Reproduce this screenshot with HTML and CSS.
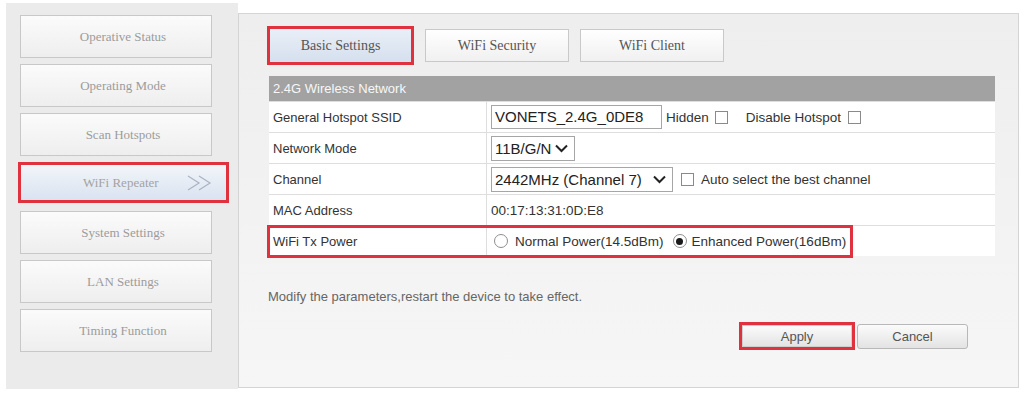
FILE: index.html
```html
<!DOCTYPE html>
<html>
<head>
<meta charset="utf-8">
<link rel="stylesheet" href="styles.css">
</head>
<body>
<div class="page">
  <aside class="sidebar">
    <div class="nav-btn">Operative Status</div>
    <div class="nav-btn">Operating Mode</div>
    <div class="nav-btn">Scan Hotspots</div>
    <div class="nav-btn active">
      <span>WiFi Repeater</span>
      <svg class="chev" width="26" height="16" viewBox="0 0 26 16"><polyline points="1,1 12,8 1,15" /><polyline points="12,1 23,8 12,15" /></svg>
    </div>
    <div class="nav-btn">System Settings</div>
    <div class="nav-btn">LAN Settings</div>
    <div class="nav-btn">Timing Function</div>
  </aside>
  <main class="content">
    <div class="tabs">
      <div class="tab active">Basic Settings</div>
      <div class="tab">WiFi Security</div>
      <div class="tab">WiFi Client</div>
    </div>
    <div class="table">
      <div class="thead">2.4G Wireless Network</div>
      <div class="row">
        <div class="label">General Hotspot SSID</div>
        <div class="value">
          <div class="textbox">VONETS_2.4G_0DE8</div>
          <span class="txt hidden-lbl">Hidden</span>
          <span class="check c-hidden"></span>
          <span class="txt disable-lbl">Disable Hotspot</span>
          <span class="check c-disable"></span>
        </div>
      </div>
      <div class="row">
        <div class="label">Network Mode</div>
        <div class="value">
          <div class="select sel-mode"><span>11B/G/N</span><svg class="arrow" width="13" height="9" viewBox="0 0 13 9"><polyline points="1,1.5 6.5,7 12,1.5" /></svg></div>
        </div>
      </div>
      <div class="row">
        <div class="label">Channel</div>
        <div class="value">
          <div class="select sel-chan"><span>2442MHz (Channel 7)</span><svg class="arrow" width="13" height="9" viewBox="0 0 13 9"><polyline points="1,1.5 6.5,7 12,1.5" /></svg></div>
          <span class="check c-auto"></span>
          <span class="txt auto-lbl">Auto select the best channel</span>
        </div>
      </div>
      <div class="row">
        <div class="label">MAC Address</div>
        <div class="value"><span class="txt">00:17:13:31:0D:E8</span></div>
      </div>
      <div class="row power-row">
        <div class="label">WiFi Tx Power</div>
        <div class="value">
          <span class="radio"></span>
          <span class="txt r-lbl">Normal Power(14.5dBm)</span>
          <span class="radio checked"></span>
          <span class="txt r-lbl2">Enhanced Power(16dBm)</span>
        </div>
        <span class="highlight"></span>
      </div>
    </div>
    <p class="note">Modify the parameters,restart the device to take effect.</p>
    <div class="actions">
      <div class="apply-wrap"><button class="btn">Apply</button></div>
      <button class="btn cancel">Cancel</button>
    </div>
  </main>
</div>
</body>
</html>
```

FILE: styles.css
```css
html, body {
  margin: 0;
  background: #ffffff;
  font-family: "Liberation Sans", Arial, sans-serif;
}

.page {
  display: flex;
  align-items: flex-start;
  padding: 3px 0 0 6px;
  height: 396px;
  box-sizing: border-box;
}

/* Sidebar */
.sidebar {
  width: 232px;
  height: 386px;
  box-sizing: border-box;
  background: #ebebeb;
  padding: 12px 0 0 14px;
  display: flex;
  flex-direction: column;
  gap: 6px;
}

.nav-btn {
  width: 192px;
  height: 43px;
  box-sizing: border-box;
  border: 1px solid #c8c8c8;
  background: linear-gradient(#fbfbfb, #eeeeee);
  display: flex;
  align-items: center;
  justify-content: center;
  padding-left: 14px;
  font-family: "Liberation Serif", "Times New Roman", serif;
  font-size: 13px;
  color: #9c9c9c;
}

.nav-btn.active {
  width: 211px;
  height: 41px;
  margin: 0 0 2px -2px;
  border: 3px solid #e0323e;
  justify-content: flex-start;
  padding: 0 13px 0 62px;
  background: linear-gradient(#f2f5fa, #d9e3f0);
  color: #a3a3a3;
}

.chev {
  margin-left: auto;
  fill: none;
  stroke: #a9b3c2;
  stroke-width: 1.2;
}

/* Content */
.content {
  margin: 10px 0 0 0;
  width: 781px;
  height: 375px;
  box-sizing: border-box;
  border: 1px solid #d4d4d4;
  background: linear-gradient(#eeeeee, #f6f6f6);
  padding: 12px 0 0 30px;
}

.tabs {
  display: flex;
  align-items: center;
  gap: 11px;
  height: 39px;
}

.tab {
  width: 144px;
  height: 33px;
  box-sizing: border-box;
  border: 1px solid #c9c9c9;
  background: linear-gradient(#ffffff, #f0f0f0);
  display: flex;
  align-items: center;
  justify-content: center;
  font-family: "Liberation Serif", "Times New Roman", serif;
  font-size: 14px;
  color: #555555;
}

.tab.active {
  width: 147px;
  height: 39px;
  margin-left: -2px;
  border: 3px solid #e0323e;
  background: linear-gradient(#e9eff7, #d5e0ee);
}

.table {
  margin-top: 11px;
  width: 726px;
  background: #ffffff;
  font-size: 13px;
  color: #333333;
}

.thead {
  height: 25px;
  line-height: 25px;
  background: #a2a2a2;
  color: #f7f7f7;
  padding-left: 4px;
}

.row {
  position: relative;
  display: flex;
  height: 31px;
  box-sizing: border-box;
  border-top: 1px solid #dedede;
}

.label {
  width: 218px;
  box-sizing: border-box;
  border-right: 1px solid #dedede;
  padding-left: 4px;
  display: flex;
  align-items: center;
}

.value {
  flex: 1;
  display: flex;
  align-items: center;
  padding-left: 4px;
  font-size: 13.5px;
}

.textbox {
  width: 171px;
  height: 24px;
  box-sizing: border-box;
  border: 1px solid #a6a6a6;
  padding-left: 3px;
  font-size: 15px;
  line-height: 22px;
  color: #222222;
}

.select {
  height: 25px;
  box-sizing: border-box;
  border: 1px solid #a6a6a6;
  display: flex;
  align-items: center;
  padding: 0 6px 0 3px;
  font-size: 15px;
  color: #222222;
}

.select .arrow {
  margin-left: auto;
  fill: none;
  stroke: #222222;
  stroke-width: 2;
}

.sel-mode { width: 84px; }
.sel-chan { width: 182px; }

.txt { white-space: nowrap; }

.check {
  width: 13px;
  height: 13px;
  box-sizing: border-box;
  border: 1px solid #8a8a8a;
  background: #ffffff;
  flex: none;
}

.hidden-lbl { margin-left: 4px; }
.c-hidden { margin-left: 6px; }
.disable-lbl { margin-left: 18px; }
.c-disable { margin-left: 7px; }
.c-auto { margin-left: 8px; }
.auto-lbl { margin-left: 7px; }

.radio {
  width: 14px;
  height: 14px;
  box-sizing: border-box;
  border: 1px solid #8e8e8e;
  border-radius: 50%;
  background: #ffffff;
  margin-left: 3px;
  flex: none;
  display: flex;
  align-items: center;
  justify-content: center;
}

.radio.checked {
  margin-left: 9px;
}

.radio.checked::after {
  content: "";
  width: 7px;
  height: 7px;
  border-radius: 50%;
  background: #1a1a1a;
}

.r-lbl { margin-left: 7px; }
.r-lbl2 { margin-left: 5px; }

.highlight {
  position: absolute;
  left: -2px;
  top: -1px;
  width: 586px;
  height: 33px;
  box-sizing: border-box;
  border: 3px solid #e0323e;
  pointer-events: none;
}

.note {
  margin: 33px 0 0 -1px;
  font-size: 13px;
  line-height: 16px;
  color: #666666;
}

.actions {
  width: 726px;
  box-sizing: border-box;
  padding-right: 27px;
  margin-top: 17px;
  display: flex;
  justify-content: flex-end;
  align-items: center;
  gap: 2px;
}

.apply-wrap {
  width: 116px;
  height: 28px;
  box-sizing: border-box;
  border: 3px solid #e0323e;
  display: flex;
}

.btn {
  flex: 1;
  margin: 0;
  border: 1px solid #b8b8b8;
  border-radius: 3px;
  background: linear-gradient(#fbfbfb, #e3e3e3);
  font-family: "Liberation Sans", Arial, sans-serif;
  font-size: 13px;
  color: #555555;
  padding: 0;
}

.apply-wrap .btn {
  border-radius: 0;
  border-color: #cfcfcf;
}

.btn.cancel {
  flex: none;
  width: 111px;
  height: 25px;
}
```
